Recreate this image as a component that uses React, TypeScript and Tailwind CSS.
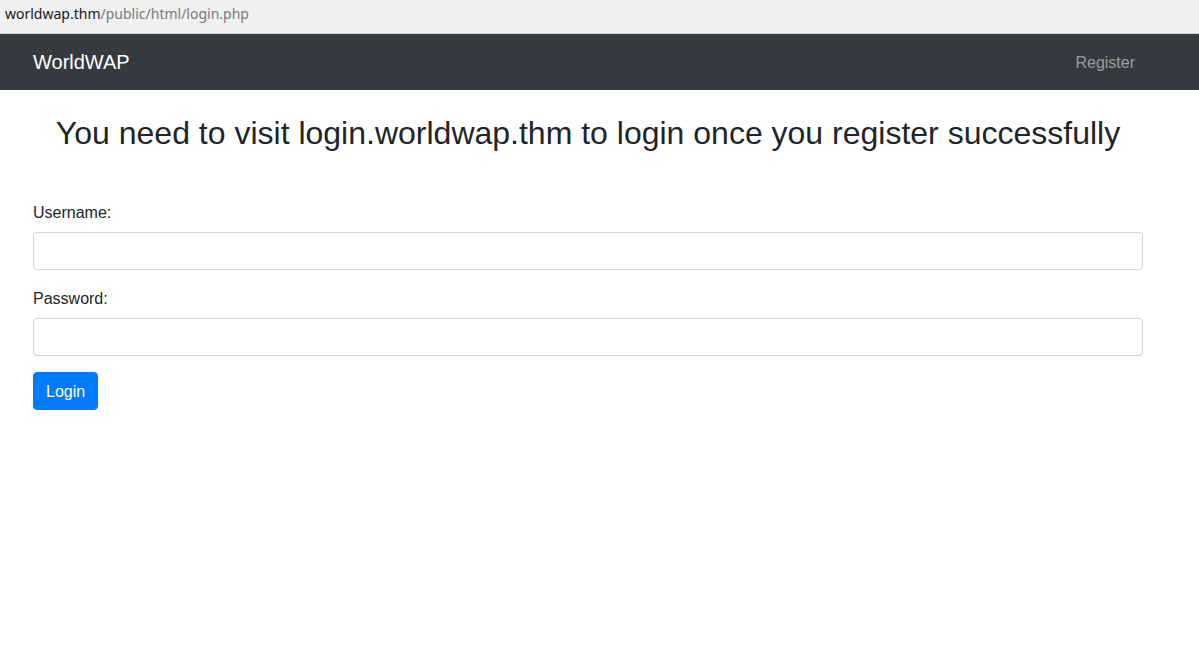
export default function App() {
  return (
    <div className="min-h-[656px] bg-white font-['Liberation_Sans',Arial,sans-serif] text-[#212529]">
      <div className="flex h-[34px] items-center border-b border-[#d0d0d0] bg-[#f0f0f0] px-[5px] pb-[6px] font-['Noto_Sans',sans-serif] text-[14px]">
        <span className="text-[#1a1a1a]">worldwap.thm</span>
        <span className="text-[#7a7a7a]">/public/html/login.php</span>
      </div>
      <nav className="flex h-[56px] items-center justify-between bg-[#343a40] pl-[33px] pr-[64px]">
        <span className="text-[20px] text-white">WorldWAP</span>
        <span className="pt-[2px] text-[16px] text-white/50">Register</span>
      </nav>
      <div className="w-[1176px] px-[33px]">
        <h2 className="mt-[24px] text-center text-[32px] leading-[38px]">
          You need to visit login.worldwap.thm to login once you register successfully
        </h2>
        <form className="mt-[48px]">
          <div className="mb-[16px]">
            <label className="mb-[7px] block pt-[1px] text-[16px] leading-[24px]">Username:</label>
            <input
              type="text"
              className="block h-[38px] w-full rounded-[4px] border border-[#ced4da] px-3"
            />
          </div>
          <div className="mb-[16px]">
            <label className="mb-[7px] block pt-[1px] text-[16px] leading-[24px]">Password:</label>
            <input
              type="password"
              className="block h-[38px] w-full rounded-[4px] border border-[#ced4da] px-3"
            />
          </div>
          <button
            type="button"
            className="h-[38px] rounded-[4px] border border-[#007bff] bg-[#007bff] px-[12px] pt-[1px] text-[16px] text-white"
          >
            Login
          </button>
        </form>
      </div>
    </div>
  );
}
